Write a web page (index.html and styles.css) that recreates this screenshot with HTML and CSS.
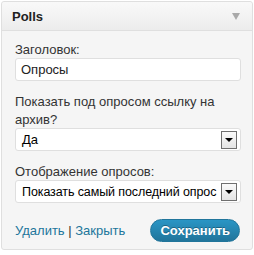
FILE: index.html
```
<!DOCTYPE html>
<html lang="ru">
<head>
  <meta charset="UTF-8">
  <title>Polls</title>
  <link rel="stylesheet" href="styles.css">
</head>
<body>
  <div class="widget">
    <div class="widget-top">
      <h3>Polls</h3>
      <span class="arrow"></span>
    </div>
    <div class="widget-inside">
      <label class="field">
        <span class="field-label">Заголовок:</span>
        <input type="text" class="text-input" value="Опросы">
      </label>

      <label class="field">
        <span class="field-label">Показать под опросом ссылку на архив?</span>
        <span class="select">
          <span class="select-value">Да</span>
          <span class="select-btn"></span>
        </span>
      </label>

      <label class="field">
        <span class="field-label">Отображение опросов:</span>
        <span class="select select-wide">
          <span class="select-value">Показать самый последний опрос</span>
          <span class="select-btn"></span>
        </span>
      </label>

      <div class="widget-control">
        <div class="links">
          <a href="#">Удалить</a> | <a href="#">Закрыть</a>
        </div>
        <button type="button" class="save">Сохранить</button>
      </div>
    </div>
  </div>
</body>
</html>
```

FILE: styles.css
```
* {
  box-sizing: border-box;
}

body {
  margin: 0;
  padding: 1px;
  background: #fff;
  font-family: "Liberation Sans", Arial, sans-serif;
  font-size: 13px;
  color: #333;
}

.widget {
  width: 252px;
  border: 1px solid #dfdfdf;
  border-radius: 3px;
  background: #f5f5f5;
}

.widget-top {
  height: 29px;
  display: flex;
  align-items: center;
  justify-content: space-between;
  padding: 0 12px 0 10px;
  background: linear-gradient(to bottom, #f9f9f9, #ececec);
  border-bottom: 1px solid #dfdfdf;
  border-radius: 3px 3px 0 0;
}

.widget-top h3 {
  margin: 0;
  font-size: 13px;
  font-weight: bold;
  color: #222;
}

.arrow {
  width: 0;
  height: 0;
  border-left: 4px solid transparent;
  border-right: 4px solid transparent;
  border-top: 7px solid #a9a9a9;
}

.widget-inside {
  padding: 10px 12px 7px 13px;
}

.field {
  display: flex;
  flex-direction: column;
  margin-bottom: 12px;
}

.field-label {
  line-height: 18px;
  color: #333;
}

.text-input {
  display: block;
  width: 226px;
  height: 23px;
  margin: -1px 0 0;
  padding: 0 5px;
  border: 1px solid #dfdfdf;
  border-radius: 3px;
  background: #fff;
  font-family: inherit;
  font-size: 13px;
  color: #222;
}

.select {
  display: flex;
  align-items: center;
  gap: 2px;
  width: 226px;
  height: 23px;
  margin-top: -1px;
  padding: 0 3px 0 6px;
  border: 1px solid #dfdfdf;
  border-radius: 3px;
  background: #fff;
  color: #000;
}

.select-value {
  flex: 1;
  min-width: 0;
  white-space: nowrap;
}

.select-wide .select-value {
  font-size: 12.5px;
  letter-spacing: -0.1px;
}

.select-btn {
  flex: none;
  position: relative;
  width: 16px;
  height: 18px;
  border: 1px solid #6f6f6f;
  background: linear-gradient(to bottom, #fafafa, #e4e4e4);
}

.select-btn::after {
  content: "";
  position: absolute;
  left: 3px;
  top: 6px;
  border-left: 4px solid transparent;
  border-right: 4px solid transparent;
  border-top: 4px solid #000;
}

.widget-control {
  display: flex;
  align-items: center;
  justify-content: space-between;
  margin-top: 16px;
}

.links a {
  color: #21759b;
  text-decoration: none;
}

.save {
  height: 23px;
  padding: 0 9px;
  border: 1px solid #21759b;
  border-radius: 12px;
  background: linear-gradient(to bottom, #2a95c5, #21759b);
  color: #fff;
  font-family: inherit;
  font-size: 13px;
  font-weight: bold;
  text-shadow: 0 -1px 0 rgba(0,0,0,0.3);
}
```
